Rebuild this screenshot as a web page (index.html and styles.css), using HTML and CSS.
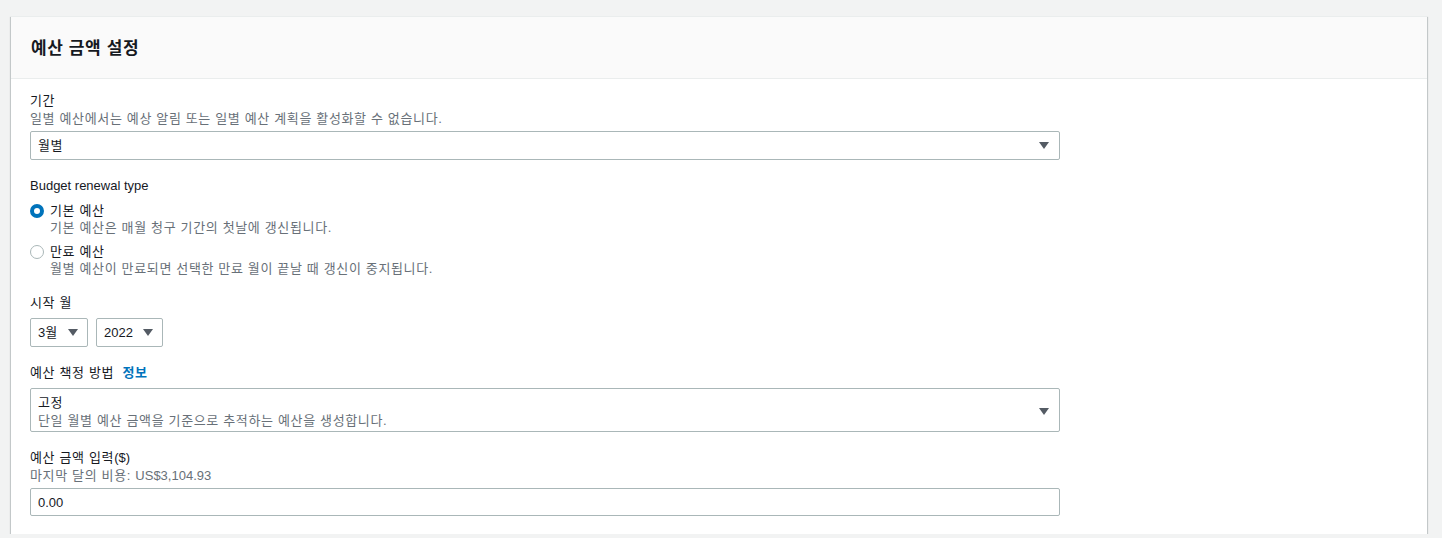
FILE: index.html
```html
<!DOCTYPE html>
<html lang="ko">
<head>
<meta charset="utf-8">
<title>예산 금액 설정</title>
<link rel="stylesheet" href="styles.css">
</head>
<body>
<div class="card">
  <div class="card-header"><h2 class="title">예산 금액 설정</h2></div>
  <div class="card-body">
    <div class="field">
      <div class="label">기간</div>
      <div class="desc">일별 예산에서는 예상 알림 또는 일별 예산 계획을 활성화할 수 없습니다.</div>
      <div class="select wide with-desc"><span class="value">월별</span><span class="caret"></span></div>
    </div>

    <div class="field">
      <div class="label latin">Budget renewal type</div>
      <div class="radios">
        <div class="radio-row">
          <span class="radio checked"></span>
          <div class="radio-text">
            <div class="radio-label">기본 예산</div>
            <div class="radio-desc">기본 예산은 매월 청구 기간의 첫날에 갱신됩니다.</div>
          </div>
        </div>
        <div class="radio-row second">
          <span class="radio"></span>
          <div class="radio-text">
            <div class="radio-label">만료 예산</div>
            <div class="radio-desc">월별 예산이 만료되면 선택한 만료 월이 끝날 때 갱신이 중지됩니다.</div>
          </div>
        </div>
      </div>
    </div>

    <div class="field">
      <div class="label">시작 월</div>
      <div class="select-row">
        <div class="select small month"><span class="value"><span class="latin">3</span>월</span><span class="caret"></span></div>
        <div class="select small year"><span class="value latin">2022</span><span class="caret"></span></div>
      </div>
    </div>

    <div class="field">
      <div class="label">예산 책정 방법 <a class="info" href="#">정보</a></div>
      <div class="select wide tall">
        <div class="value-block">
          <div class="value">고정</div>
          <div class="value-desc">단일 월별 예산 금액을 기준으로 추적하는 예산을 생성합니다.</div>
        </div>
        <span class="caret"></span>
      </div>
    </div>

    <div class="field last">
      <div class="label">예산 금액 입력<span class="latin">($)</span></div>
      <div class="desc">마지막 달의 비용: <span class="latin">US$3,104.93</span></div>
      <div class="input wide with-desc latin">0.00</div>
    </div>
  </div>
</div>
</body>
</html>
```

FILE: styles.css
```css
* { box-sizing: border-box; }
html, body { margin: 0; }
body {
  background: #f2f3f3;
  padding: 16px 15px 0 11px;
  font-family: "Liberation Sans", "Noto Sans CJK KR", sans-serif;
  font-size: 13px;
  letter-spacing: 0.65px;
  color: #16191f;
}
.latin { letter-spacing: 0; font-family: "Liberation Sans", "Noto Sans CJK KR", sans-serif; }
.card {
  background: #fff;
  border-top: 1px solid #eaeded;
  box-shadow: 0 1px 1px 0 rgba(0, 28, 36, 0.3), 1px 1px 1px 0 rgba(0, 28, 36, 0.15), -1px 1px 1px 0 rgba(0, 28, 36, 0.15);
  padding-bottom: 18px;
}
.card-header {
  background: #fafafa;
  border-bottom: 1px solid #eaeded;
  height: 62px;
  display: flex;
  align-items: center;
  padding: 0 19px 3px 20px;
}
.title {
  margin: 0;
  font-size: 17px;
  font-weight: 700;
  letter-spacing: 0.6px;
  font-family: "Noto Sans CJK KR", sans-serif;
  color: #16191f;
}
.card-body {
  padding: 13px 19px 0;
}
.field { margin-bottom: 17px; }
.field.last { margin-bottom: 0; }
.label {
  line-height: 18px;
  color: #16191f;
}
.label + .select, .label + .select-row, .label + .input { margin-top: 6px; }
.desc {
  line-height: 18px;
  color: #687078;
}
.info {
  color: #0073bb;
  font-weight: 700;
  text-decoration: none;
  margin-left: 4px;
}
.select, .input {
  border: 1px solid #aab7b8;
  border-radius: 2px;
  background: #fff;
  display: flex;
  align-items: center;
  justify-content: space-between;
  padding: 0 10px 0 7px;
  color: #16191f;
  white-space: nowrap;
}
.with-desc { margin-top: 3px; }
.wide { width: 1030px; }
.select { height: 29px; }
.input { height: 28px; }
.value { line-height: 18px; }
.caret {
  width: 0;
  height: 0;
  border-left: 5px solid transparent;
  border-right: 5px solid transparent;
  border-top: 7px solid #545b64;
  flex: none;
}
.select.tall {
  height: 44px;
  padding-top: 2px;
}
.value-desc {
  line-height: 17px;
  color: #687078;
}
.select-row { display: flex; gap: 8px; }
.select.small { padding: 0 9px 0 7px; }
.month { width: 58px; }
.year { width: 67px; }
.radios { margin-top: 7px; }
.radio-row { display: flex; align-items: flex-start; }
.radio-row.second { margin-top: 7px; }
.radio {
  width: 14px;
  height: 14px;
  border-radius: 50%;
  border: 1px solid #aab7b8;
  margin-top: 2px;
  margin-right: 6px;
  flex: none;
  background: #fff;
}
.radio.checked {
  border: 4px solid #0073bb;
  background: #fff;
}
.radio-label {
  line-height: 18px;
}
.radio-desc {
  line-height: 16px;
  color: #687078;
}
```
